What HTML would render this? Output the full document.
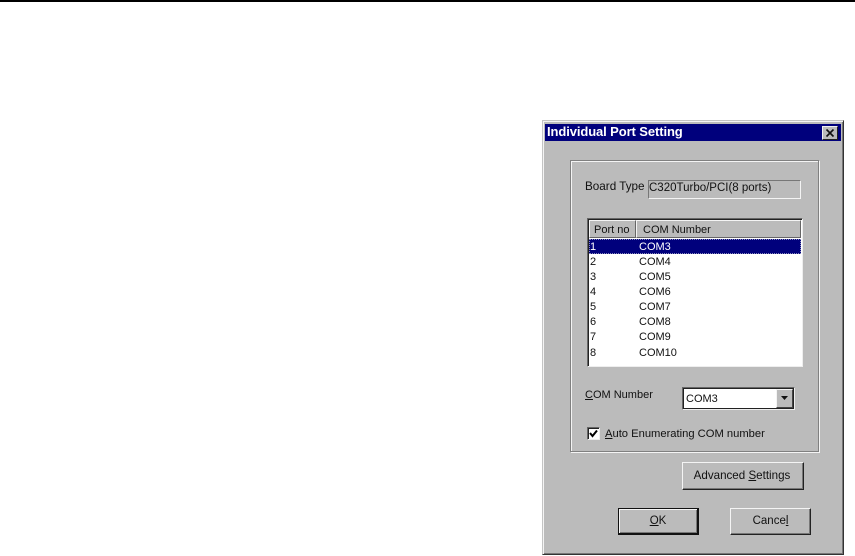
<!DOCTYPE html>
<html><head><meta charset="utf-8"><style>
html,body{margin:0;padding:0;width:855px;height:556px;overflow:hidden;background:#fff}
body{position:relative;font-family:"Liberation Sans",sans-serif;font-size:11px;color:#111}
div{position:absolute;box-sizing:border-box}
#w{left:0;top:0;width:855px;height:556px;filter:blur(.35px)}
.t{white-space:nowrap;line-height:14px;height:14px}
u{text-decoration:underline}
.btn{background:#bbb;border:1px solid;border-color:#f4f4f4 #222 #222 #f4f4f4;box-shadow:inset -1px -1px 0 #777;text-align:center;color:#111}
</style></head><body><div id="w">
<div style="left:0;top:0;width:855px;height:2px;background:#000"></div>

<div style="left:542px;top:120px;width:302px;height:435px;background:#bbb;border:1px solid;border-color:#c4c4c4 #333 #333 #c4c4c4;box-shadow:inset 1px 1px 0 #f4f4f4,inset -1px -1px 0 #777"></div>
<div style="left:545px;top:124px;width:296px;height:17px;background:#00007c"></div>
<div class="t" style="left:547px;top:125px;color:#fff;font-weight:bold;font-size:13px;letter-spacing:-.1px">Individual Port Setting</div>
<div style="left:822px;top:126px;width:16px;height:14px;background:#bbb;border:1px solid;border-color:#f0f0f0 #222 #222 #f0f0f0"></div>
<svg style="position:absolute;left:822px;top:126px" width="16" height="14"><path d="M4.5 3.5L11.5 10.5M11.5 3.5L4.5 10.5" stroke="#111" stroke-width="1.6"/></svg>

<div style="left:570px;top:160px;width:249px;height:292px;border:1px solid #808080;box-shadow:inset 1px 1px 0 #f4f4f4,1px 1px 0 #f4f4f4"></div>

<div class="t" style="left:585px;top:180px;font-size:11.7px">Board Type</div>
<div style="left:648px;top:180px;width:153px;height:19px;border:1px solid;border-color:#777 #f4f4f4 #f4f4f4 #777"></div>
<div class="t" style="left:649px;top:181px;font-size:11.5px">C320Turbo/PCI(8 ports)</div>

<div style="left:587px;top:218px;width:216px;height:149px;background:#fff;border:1px solid;border-color:#666 #eee #eee #666;box-shadow:inset 1px 1px 0 #222"></div>
<div style="left:589px;top:220px;width:47px;height:18px;background:#bbb;border:1px solid;border-color:#f4f4f4 #666 #666 #f4f4f4"></div>
<div style="left:636px;top:220px;width:165px;height:18px;background:#bbb;border:1px solid;border-color:#f4f4f4 #666 #666 #f4f4f4"></div>
<div class="t" style="left:594px;top:223px">Port no</div>
<div class="t" style="left:643px;top:223px">COM Number</div>
<div style="left:589px;top:239px;width:212px;height:15px;background:#00007c;outline:1px dotted #8888bb;outline-offset:-1px"></div>
<div class="t" style="left:590px;top:240px;color:#fff">1</div><div class="t" style="left:639px;top:240px;color:#fff">COM3</div>
<div class="t" style="left:590px;top:255px">2</div><div class="t" style="left:639px;top:255px">COM4</div>
<div class="t" style="left:590px;top:270px">3</div><div class="t" style="left:639px;top:270px">COM5</div>
<div class="t" style="left:590px;top:285px">4</div><div class="t" style="left:639px;top:285px">COM6</div>
<div class="t" style="left:590px;top:300px">5</div><div class="t" style="left:639px;top:300px">COM7</div>
<div class="t" style="left:590px;top:315px">6</div><div class="t" style="left:639px;top:315px">COM8</div>
<div class="t" style="left:590px;top:330px">7</div><div class="t" style="left:639px;top:330px">COM9</div>
<div class="t" style="left:590px;top:346px">8</div><div class="t" style="left:639px;top:346px">COM10</div>

<div class="t" style="left:585px;top:388px"><u>C</u>OM Number</div>
<div style="left:682px;top:387px;width:113px;height:23px;background:#fff;border:1px solid;border-color:#666 #eee #eee #666;box-shadow:inset 1px 1px 0 #222,inset -1px -1px 0 #222"></div>
<div class="t" style="left:686px;top:392px">COM3</div>
<div style="left:776px;top:389px;width:17px;height:19px;background:#bbb;border:1px solid;border-color:#f4f4f4 #444 #444 #f4f4f4"></div>
<svg style="position:absolute;left:776px;top:389px" width="17" height="19"><path d="M5 7H12L8.5 11Z" fill="#111"/></svg>

<div style="left:587px;top:427px;width:13px;height:13px;background:#fff;border:1px solid;border-color:#666 #eee #eee #666;box-shadow:inset 1px 1px 0 #222"></div>
<svg style="position:absolute;left:587px;top:427px" width="13" height="13"><path d="M3 6L5.5 9L10 3.5" fill="none" stroke="#000" stroke-width="2"/></svg>
<div class="t" style="left:605px;top:427px;font-size:11.2px"><u>A</u>uto Enumerating COM number</div>

<div class="btn t" style="left:682px;top:462px;width:120px;height:28px;line-height:26px;font-size:11.6px;width:122px;padding-right:2px">Advanced <u>S</u>ettings</div>
<div class="btn t" style="left:618px;top:508px;width:81px;height:27px;line-height:24px;font-size:11.5px;border:1px solid #111;border-right-width:2px;border-bottom-width:2px;box-shadow:inset 1px 1px 0 #f4f4f4,inset -1px -1px 0 #777"><u>O</u>K</div>
<div class="btn t" style="left:730px;top:508px;width:81px;height:27px;line-height:24px;font-size:11.5px">Cance<u>l</u></div>
</div></body></html>
